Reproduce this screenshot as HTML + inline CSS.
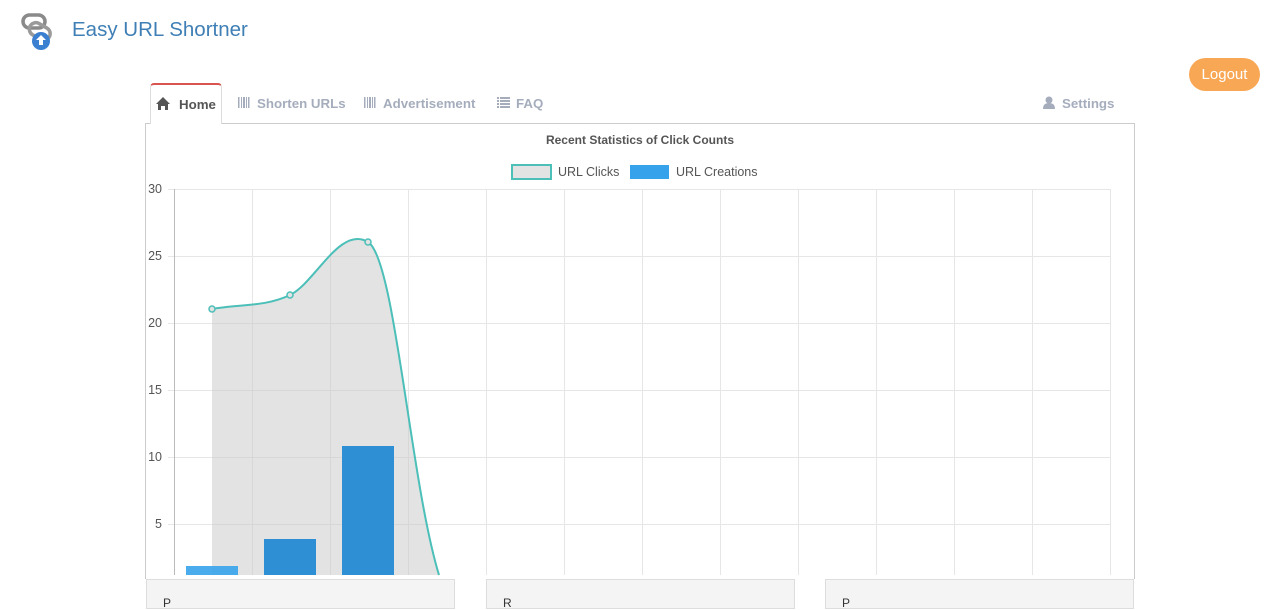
<!DOCTYPE html>
<html><head><meta charset="utf-8"><style>
*{margin:0;padding:0;box-sizing:border-box}
body{width:1280px;height:600px;overflow:hidden;background:#fff;font-family:"Liberation Sans",sans-serif;position:relative}
.abs{position:absolute}
.title{left:72px;top:18px;font-size:20.5px;color:#3f7fb5}
.logout{left:1189px;top:58px;width:71px;height:33px;border-radius:17px;background:#f8a755;color:#fff;font-size:15px;text-align:center;line-height:34px}
.tab{top:96px;font-size:13.3px;font-weight:bold;color:#a5adbd;white-space:nowrap}
.home{left:150px;top:83px;width:72px;height:41px;border:1px solid #ddd;border-top:2px solid #d9534f;border-bottom:none;border-radius:4px 4px 0 0;background:#fff;z-index:2}
.box{left:145px;top:123px;width:990px;height:456px;border:1px solid #ccc;border-bottom:1px solid #bbb}
.panel{top:579px;height:30px;background:#f4f4f4;border:1px solid #ddd;font-size:12px;padding:16px 0 0 16px;color:#333}
</style></head><body>
<svg class="abs" style="left:20px;top:12px" width="38" height="40" viewBox="0 0 38 40">
<rect x="3" y="3" width="22" height="13" rx="6.5" fill="none" stroke="#8a8a8a" stroke-width="3.5"/>
<rect x="9" y="13" width="22" height="13" rx="6.5" fill="none" stroke="#9a9a9a" stroke-width="3.5" transform="rotate(30 20 19)"/>
<circle cx="21" cy="29" r="9" fill="#3a7fd0"/>
<path d="M21 23l-5 5h3v5h4v-5h3z" fill="#fff"/>
</svg>
<div class="abs title">Easy URL Shortner</div>
<div class="abs logout">Logout</div>
<div class="abs box"></div>
<div class="abs home"></div>
<div class="abs tab" style="left:179px;top:97px;color:#555;z-index:3">Home</div>
<div class="abs tab" style="left:257px">Shorten URLs</div>
<div class="abs tab" style="left:383px">Advertisement</div>
<div class="abs tab" style="left:516px">FAQ</div>
<div class="abs tab" style="left:1062px">Settings</div>
<svg class="abs" style="left:0;top:0;z-index:4" width="1280" height="130">
<path d="M156 104 L163 97 L170 104 H168 V110 H165 V106 H161 V110 H158 V104 Z" fill="#555"/>
<g fill="#a5adbd"><rect x="238" y="97" width="1.5" height="11"/><rect x="241" y="97" width="1" height="11"/><rect x="243" y="97" width="2" height="11"/><rect x="246" y="97" width="1" height="11"/><rect x="248" y="97" width="1.5" height="11"/></g>
<g fill="#a5adbd"><rect x="364" y="97" width="1.5" height="11"/><rect x="367" y="97" width="1" height="11"/><rect x="369" y="97" width="2" height="11"/><rect x="372" y="97" width="1" height="11"/><rect x="374" y="97" width="1.5" height="11"/></g>
<g fill="#a5adbd"><rect x="497" y="97" width="2" height="2"/><rect x="500" y="97" width="10" height="2"/><rect x="497" y="100" width="2" height="2"/><rect x="500" y="100" width="10" height="2"/><rect x="497" y="103" width="2" height="2"/><rect x="500" y="103" width="10" height="2"/><rect x="497" y="106" width="2" height="2"/><rect x="500" y="106" width="10" height="2"/></g>
<g fill="#a5adbd"><circle cx="1049" cy="100" r="3.5"/><path d="M1043 109 C1043 104 1046 103 1049 103 C1052 103 1055 104 1055 109 Z"/></g>
</svg>
<svg class="abs" style="left:0;top:0" width="1280" height="600">
<text x="640" y="144" text-anchor="middle" font-size="12" font-weight="bold" fill="#555" font-family="Liberation Sans">Recent Statistics of Click Counts</text>
<rect x="512" y="165" width="39" height="14" fill="#e3e3e3" stroke="#4bbfb8" stroke-width="2"/>
<text x="558" y="176" font-size="12.5" fill="#555" font-family="Liberation Sans">URL Clicks</text>
<rect x="630" y="165" width="39" height="14" fill="#36a2eb"/>
<text x="676" y="176" font-size="12.5" fill="#555" font-family="Liberation Sans">URL Creations</text>
<g stroke="#e6e6e6" stroke-width="1">
<line x1="168" y1="189.5" x2="1110" y2="189.5"/><line x1="168" y1="256.5" x2="1110" y2="256.5"/><line x1="168" y1="323.5" x2="1110" y2="323.5"/><line x1="168" y1="390.5" x2="1110" y2="390.5"/><line x1="168" y1="457.5" x2="1110" y2="457.5"/><line x1="168" y1="524.5" x2="1110" y2="524.5"/>
<line x1="252.5" y1="189" x2="252.5" y2="575"/><line x1="330.5" y1="189" x2="330.5" y2="575"/><line x1="408.5" y1="189" x2="408.5" y2="575"/><line x1="486.5" y1="189" x2="486.5" y2="575"/><line x1="564.5" y1="189" x2="564.5" y2="575"/><line x1="642.5" y1="189" x2="642.5" y2="575"/><line x1="720.5" y1="189" x2="720.5" y2="575"/><line x1="798.5" y1="189" x2="798.5" y2="575"/><line x1="876.5" y1="189" x2="876.5" y2="575"/><line x1="954.5" y1="189" x2="954.5" y2="575"/><line x1="1032.5" y1="189" x2="1032.5" y2="575"/><line x1="1110.5" y1="189" x2="1110.5" y2="575"/>
</g>
<line x1="174.5" y1="189" x2="174.5" y2="575" stroke="#bbb"/>
<g font-size="12.5" fill="#555" font-family="Liberation Sans" text-anchor="end">
<text x="162" y="193">30</text><text x="162" y="260">25</text><text x="162" y="327">20</text><text x="162" y="394">15</text><text x="162" y="461">10</text><text x="162" y="528">5</text></g>
<path d="M212 309 C240 304 265 307 290 295 C315 283 340 225 368 242 C395 258 410 480 439 575 L212 575 Z" fill="rgba(200,200,200,0.5)"/>
<rect x="186" y="566" width="52" height="9" fill="#36a2eb" opacity="0.9"/>
<rect x="264" y="539" width="52" height="36" fill="#2f8fd5"/>
<rect x="342" y="446" width="52" height="129" fill="#2f8fd5"/>
<path d="M212 309 C240 304 265 307 290 295 C315 283 340 225 368 242 C395 258 410 480 439 575" fill="none" stroke="#4bbfb8" stroke-width="2"/>
<g fill="#e3e3e3" stroke="#4bbfb8" stroke-width="1.5"><circle cx="212" cy="309" r="3"/><circle cx="290" cy="295" r="3"/><circle cx="368" cy="242" r="3"/></g>
<rect x="146" y="576" width="988" height="3" fill="#fff"/>
</svg>
<div class="abs panel" style="left:146px;width:309px">P</div>
<div class="abs panel" style="left:486px;width:309px">R</div>
<div class="abs panel" style="left:825px;width:309px">P</div>
</body></html>
